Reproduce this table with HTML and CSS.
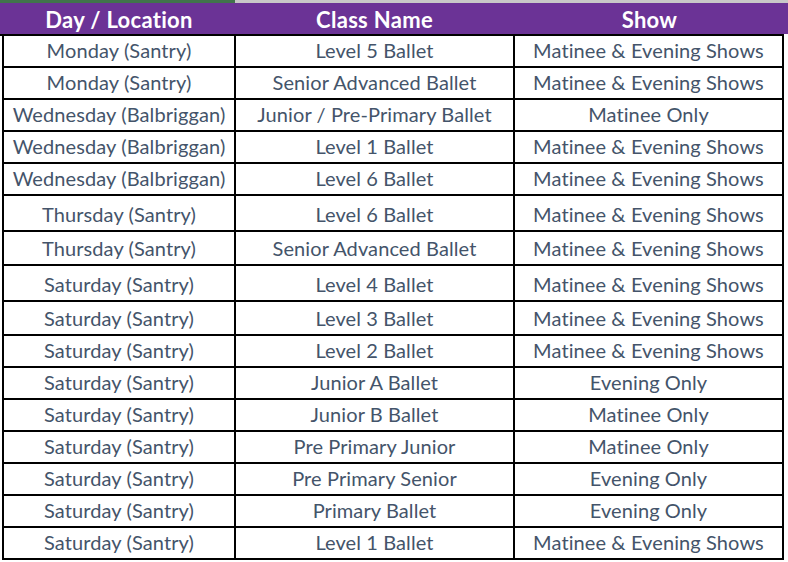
FILE: index.html
```html
<!DOCTYPE html>
<html lang="en">
<head>
<meta charset="utf-8">
<title>Class Schedule</title>
<link rel="stylesheet" href="styles.css">
</head>
<body>
<div class="sheet">
  <div class="topstrip"><div class="sel"></div><div class="rest"></div></div>
  <div class="head">
    <div class="hcell">Day / Location</div>
    <div class="hcell">Class Name</div>
    <div class="hcell">Show</div>
  </div>
  <div class="head-rule"></div>
  <div class="grid">
    <div class="row h32"><div class="cell">Monday (Santry)</div><div class="cell">Level 5 Ballet</div><div class="cell last">Matinee &amp; Evening Shows</div></div>
    <div class="row h32"><div class="cell">Monday (Santry)</div><div class="cell">Senior Advanced Ballet</div><div class="cell last">Matinee &amp; Evening Shows</div></div>
    <div class="row h32"><div class="cell">Wednesday (Balbriggan)</div><div class="cell">Junior / Pre-Primary Ballet</div><div class="cell last">Matinee Only</div></div>
    <div class="row h32"><div class="cell">Wednesday (Balbriggan)</div><div class="cell">Level 1 Ballet</div><div class="cell last">Matinee &amp; Evening Shows</div></div>
    <div class="row h32"><div class="cell">Wednesday (Balbriggan)</div><div class="cell">Level 6 Ballet</div><div class="cell last">Matinee &amp; Evening Shows</div></div>
    <div class="row h36"><div class="cell">Thursday (Santry)</div><div class="cell">Level 6 Ballet</div><div class="cell last">Matinee &amp; Evening Shows</div></div>
    <div class="row h34"><div class="cell">Thursday (Santry)</div><div class="cell">Senior Advanced Ballet</div><div class="cell last">Matinee &amp; Evening Shows</div></div>
    <div class="row h36"><div class="cell">Saturday (Santry)</div><div class="cell">Level 4 Ballet</div><div class="cell last">Matinee &amp; Evening Shows</div></div>
    <div class="row h34"><div class="cell">Saturday (Santry)</div><div class="cell">Level 3 Ballet</div><div class="cell last">Matinee &amp; Evening Shows</div></div>
    <div class="row h32"><div class="cell">Saturday (Santry)</div><div class="cell">Level 2 Ballet</div><div class="cell last">Matinee &amp; Evening Shows</div></div>
    <div class="row h32"><div class="cell">Saturday (Santry)</div><div class="cell">Junior A Ballet</div><div class="cell last">Evening Only</div></div>
    <div class="row h32"><div class="cell">Saturday (Santry)</div><div class="cell">Junior B Ballet</div><div class="cell last">Matinee Only</div></div>
    <div class="row h32"><div class="cell">Saturday (Santry)</div><div class="cell">Pre Primary Junior</div><div class="cell last">Matinee Only</div></div>
    <div class="row h32"><div class="cell">Saturday (Santry)</div><div class="cell">Pre Primary Senior</div><div class="cell last">Evening Only</div></div>
    <div class="row h32"><div class="cell">Saturday (Santry)</div><div class="cell">Primary Ballet</div><div class="cell last">Evening Only</div></div>
    <div class="row h32"><div class="cell">Saturday (Santry)</div><div class="cell">Level 1 Ballet</div><div class="cell last">Matinee &amp; Evening Shows</div></div>
  </div>
</div>
</body>
</html>
```
FILE: styles.css
```css
* { box-sizing: border-box; }
html, body {
  margin: 0;
  padding: 0;
  background: #ffffff;
}
body {
  font-family: Lato, "Open Sans", sans-serif;
  width: 788px;
  height: 562px;
  overflow: hidden;
}
.topstrip {
  display: flex;
  height: 3px;
}
.topstrip .sel {
  width: 235px;
  background: #41744c;
}
.topstrip .rest {
  flex: 1;
  background: #c8c8c8;
}
.head {
  display: grid;
  grid-template-columns: 2px 232px 279px 271px 4px;
  height: 31px;
  background: #6b3396;
  color: #ffffff;
  font-weight: 700;
  font-size: 22px;
  letter-spacing: 0.3px;
}
.head::before { content: ""; }
.hcell {
  display: flex;
  align-items: center;
  justify-content: center;
  padding-left: 2px;
  line-height: 22px;
  padding-top: 2px;
  white-space: nowrap;
}
.head-rule {
  width: 784px;
  height: 2px;
  background: #000000;
}
.grid {
  margin-left: 2px;
  width: 782px;
}
.row {
  display: grid;
  grid-template-columns: 232px 279px 271px;
  border-bottom: 2px solid #000000;
}
.h32 { height: 32px; }
.h34 { height: 34px; }
.h36 { height: 36px; }
.cell {
  display: flex;
  align-items: flex-end;
  justify-content: center;
  border-left: 2px solid #000000;
  color: #44546a;
  font-size: 20px;
  letter-spacing: 0.1px;
  line-height: 20px;
  padding-bottom: 6px;
  white-space: nowrap;
}
.cell.last {
  border-right: 2px solid #000000;
}
```
